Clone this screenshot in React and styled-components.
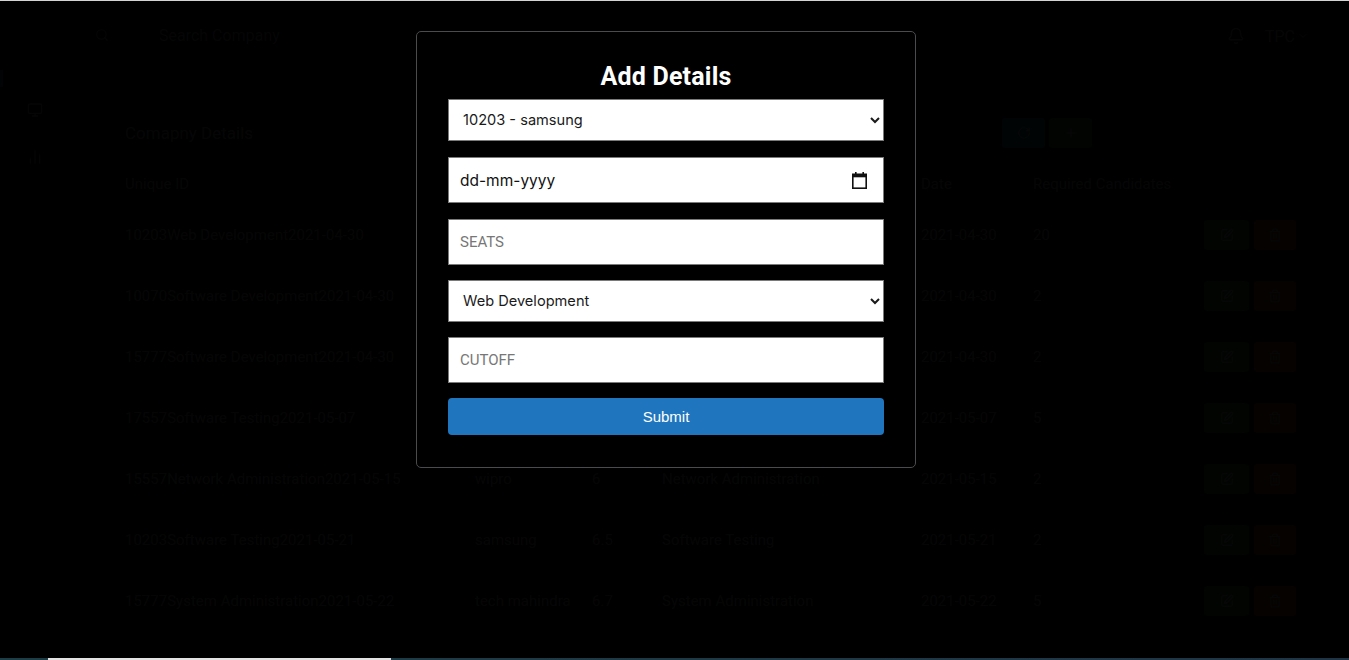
import React from 'react';
import styled, { createGlobalStyle } from 'styled-components';
import { Search, Bell, ChevronDown, Monitor, BarChart2, RotateCw, Plus, SquarePen, Trash2 } from 'lucide-react';

const Global = createGlobalStyle`
	html, body {
		margin: 0;
		padding: 0;
		background: #000;
		overflow: hidden;
	}
	* {
		box-sizing: border-box;
	}
`;

const rows = [
	{ id: '10203', company: 'samsung', cutoff: '6.5', role: 'Web Development', date: '2021-04-30', need: '20' },
	{ id: '10070', company: 'infosys', cutoff: '6', role: 'Software Development', date: '2021-04-30', need: '2' },
	{ id: '15777', company: 'tech mahindra', cutoff: '6.7', role: 'Software Development', date: '2021-04-30', need: '2' },
	{ id: '17557', company: 'tcs', cutoff: '6', role: 'Software Testing', date: '2021-05-07', need: '5' },
	{ id: '15557', company: 'wipro', cutoff: '6', role: 'Network Administration', date: '2021-05-15', need: '2' },
	{ id: '10203', company: 'samsung', cutoff: '6.5', role: 'Software Testing', date: '2021-05-21', need: '2' },
	{ id: '15777', company: 'tech mahindra', cutoff: '6.7', role: 'System Administration', date: '2021-05-22', need: '5' },
];

/* ---------- page behind the dialog ---------- */

const Page = styled.div`
	display: flex;
	height: 100vh;
	background: #050505;
	color: #d8d8d8;
	font-family: Roboto, 'Liberation Sans', sans-serif;
`;

const Sidebar = styled.nav`
	width: 70px;
	flex-shrink: 0;
	display: flex;
	flex-direction: column;
	align-items: center;
	padding-top: 70px;
	gap: 31px;
	position: relative;
	color: #cfcfcf;
`;

const ActiveMark = styled.span`
	position: absolute;
	left: 0;
	top: 70px;
	width: 3px;
	height: 17px;
	background: #4a8fb8;
`;

const SideIcon = styled.div`
	width: 70px;
	height: 16px;
	display: flex;
	justify-content: center;
	margin-top: ${(p) => p.$top || 0}px;
`;

const Main = styled.main`
	flex: 1;
	display: flex;
	flex-direction: column;
`;

const TopBar = styled.header`
	height: 72px;
	display: flex;
	align-items: center;
	padding: 0 40px 0 25px;
`;

const SearchBox = styled.div`
	display: flex;
	align-items: center;
	gap: 50px;
	font-size: 16px;
	color: #bdbdbd;
	margin-top: -2px;
`;

const UserArea = styled.div`
	margin-left: auto;
	display: flex;
	align-items: center;
	gap: 20px;
	font-size: 16px;
	span {
		display: flex;
		align-items: center;
		gap: 2px;
	}
`;

const Content = styled.section`
	padding: 46px 0 0 55px;
`;

const TitleRow = styled.div`
	width: 967px;
	display: flex;
	align-items: center;
	justify-content: space-between;
	height: 30px;
`;

const Title = styled.h2`
	margin: 0;
	font-size: 17px;
	font-weight: 400;
`;

const ButtonPair = styled.div`
	display: flex;
	gap: 4px;
`;

const SmallBtn = styled.button`
	width: ${(p) => p.$w || 43}px;
	height: ${(p) => p.$h || 30}px;
	border: none;
	border-radius: 3px;
	background: ${(p) => p.$bg};
	color: #fff;
	display: flex;
	align-items: center;
	justify-content: center;
	padding: 0;
`;

const Table = styled.div`
	margin-top: 16px;
	display: grid;
	grid-template-columns: 350px 117px 70px 259px 112px 171px auto;
	font-size: 15px;
`;

const HeadCell = styled.div`
	height: 40px;
	display: flex;
	align-items: center;
	font-size: 15px;
	color: #d0d0d0;
`;

const Cell = styled.div`
	height: 61px;
	display: flex;
	align-items: center;
	white-space: nowrap;
	gap: 5px;
`;

/* ---------- dialog ---------- */

const Backdrop = styled.div`
	position: fixed;
	inset: 0;
	background: rgba(0, 0, 0, 0.978);
	display: flex;
	justify-content: center;
	align-items: flex-start;
	padding: 31px 17px 0 0;
`;

const Modal = styled.form`
	width: 500px;
	background: #000;
	border: 1px solid #4b4b4d;
	border-radius: 5px;
	padding: 31px 31px 32px;
	display: flex;
	flex-direction: column;
	gap: 15px;
`;

const Heading = styled.h3`
	margin: 0 0 -7px;
	height: 28px;
	line-height: 28px;
	text-align: center;
	color: #fff;
	font-family: Roboto, 'Liberation Sans', sans-serif;
	font-weight: 700;
	font-size: 25px;
	letter-spacing: 0.2px;
`;

const Select = styled.select`
	width: 100%;
	height: 42px;
	margin-bottom: ${(p) => (p.$extra ? 1 : 0)}px;
	border: 1px solid #7a7a7a;
	border-radius: 0;
	background: #fff;
	color: #1a1a1a;
	font-family: Inter, 'Noto Sans', sans-serif;
	font-size: 14.6px;
	padding: 0 6px 0 10px;
	outline: none;
`;

const Input = styled.input`
	width: 100%;
	height: 46px;
	border: 1px solid #7a7a7a;
	border-radius: 0;
	background: #fff;
	color: #111;
	font-family: Roboto, 'Liberation Sans', sans-serif;
	font-size: 15px;
	padding: 0 11px;
	outline: none;
	&::placeholder {
		color: #777;
	}
`;

const DateBox = styled.label`
	width: 100%;
	height: 46px;
	margin-bottom: 1px;
	border: 1px solid #7a7a7a;
	background: #fff;
	display: flex;
	align-items: center;
	padding: 0 16px 0 11px;
	input {
		flex: 1;
		border: none;
		outline: none;
		padding: 0;
		font-family: Inter, 'Noto Sans', sans-serif;
		font-size: 15.5px;
		color: #111;
	}
	input::placeholder {
		color: #111;
	}
`;

const Submit = styled.button`
	width: 100%;
	height: 37px;
	border: none;
	border-radius: 4px;
	background: #1f76be;
	color: #fff;
	font-family: 'Liberation Sans', Arial, sans-serif;
	font-size: 15px;
	cursor: pointer;
`;

const EdgeLine = styled.div`
	position: fixed;
	left: 0;
	right: 0;
	top: 0;
	height: 1px;
	background: #d4d4d4;
`;

const BottomBar = styled.div`
	position: fixed;
	left: 0;
	right: 0;
	bottom: 0;
	height: 2px;
	background: linear-gradient(90deg, #1c3d46, #1f3546);
`;

const Thumb = styled.div`
	position: absolute;
	left: 48px;
	top: 0;
	width: 343px;
	height: 2px;
	background: #e3e3e3;
`;

function CalendarIcon() {
	return (
		<svg width="15" height="17" viewBox="0 0 15 17" fill="none">
			<rect x="3" y="0" width="1.6" height="3" fill="#111" />
			<rect x="10.4" y="0" width="1.6" height="3" fill="#111" />
			<rect x="0.8" y="2.3" width="13.4" height="13.9" stroke="#111" strokeWidth="1.6" />
			<rect x="0.8" y="2.3" width="13.4" height="3" fill="#111" />
		</svg>
	);
}

export default function App() {
	return (
		<>
			<Global />
			<Page>
				<Sidebar>
					<ActiveMark />
					<SideIcon $top={32}>
						<Monitor size={16} />
					</SideIcon>
					<SideIcon>
						<BarChart2 size={16} />
					</SideIcon>
				</Sidebar>
				<Main>
					<TopBar>
						<SearchBox>
							<Search size={14} />
							<span>Search Company</span>
						</SearchBox>
						<UserArea>
							<Bell size={18} />
							<span>
								TPC <ChevronDown size={12} />
							</span>
						</UserArea>
					</TopBar>
					<Content>
						<TitleRow>
							<Title>Comapny Details</Title>
							<ButtonPair>
								<SmallBtn $bg="#17a2b8">
									<RotateCw size={14} />
								</SmallBtn>
								<SmallBtn $bg="#28a745">
									<Plus size={14} />
								</SmallBtn>
							</ButtonPair>
						</TitleRow>
						<Table>
							<HeadCell>Unique ID</HeadCell>
							<HeadCell>Company</HeadCell>
							<HeadCell>Cutoff</HeadCell>
							<HeadCell>Job Role</HeadCell>
							<HeadCell>Date</HeadCell>
							<HeadCell>Required Candidates</HeadCell>
							<HeadCell />
							{rows.map((r, i) => (
								<React.Fragment key={i}>
									<Cell>{r.id + r.role + r.date}</Cell>
									<Cell>{r.company}</Cell>
									<Cell>{r.cutoff}</Cell>
									<Cell>{r.role}</Cell>
									<Cell>{r.date}</Cell>
									<Cell>{r.need}</Cell>
									<Cell>
										<SmallBtn $bg="#28a745" $w={45}>
											<SquarePen size={14} />
										</SmallBtn>
										<SmallBtn $bg="#e0661e" $w={42}>
											<Trash2 size={14} />
										</SmallBtn>
									</Cell>
								</React.Fragment>
							))}
						</Table>
					</Content>
				</Main>
			</Page>

			<Backdrop>
				<Modal onSubmit={(e) => e.preventDefault()}>
					<Heading>Add Details</Heading>
					<Select $extra defaultValue="10203">
						<option value="10203">10203 - samsung</option>
						<option value="15557">15557 - wipro</option>
						<option value="15777">15777 - tech mahindra</option>
					</Select>
					<DateBox>
						<input type="text" placeholder="dd-mm-yyyy" />
						<CalendarIcon />
					</DateBox>
					<Input placeholder="SEATS" />
					<Select defaultValue="web">
						<option value="web">Web Development</option>
						<option value="soft">Software Development</option>
						<option value="test">Software Testing</option>
					</Select>
					<Input placeholder="CUTOFF" />
					<Submit type="submit">Submit</Submit>
				</Modal>
			</Backdrop>

			<EdgeLine />
			<BottomBar>
				<Thumb />
			</BottomBar>
		</>
	);
}
